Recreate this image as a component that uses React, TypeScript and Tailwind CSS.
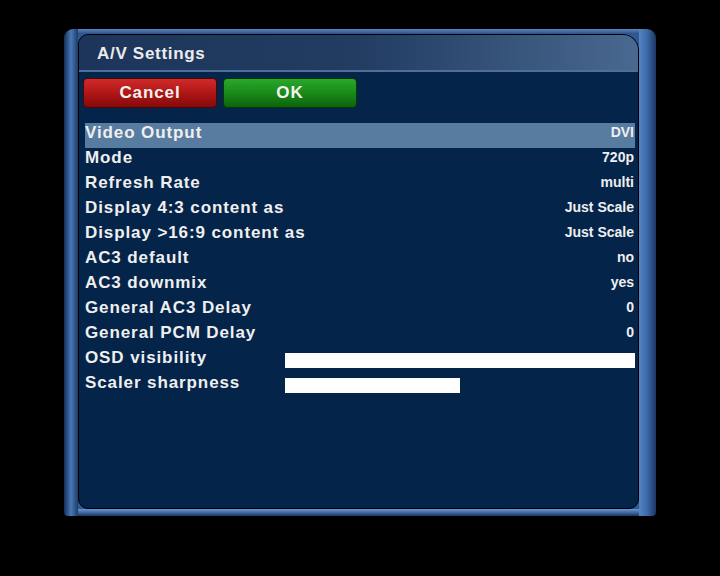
import React from "react";

const rows = [
  { label: "Video Output", value: "DVI" },
  { label: "Mode", value: "720p" },
  { label: "Refresh Rate", value: "multi" },
  { label: "Display 4:3 content as", value: "Just Scale" },
  { label: "Display >16:9 content as", value: "Just Scale" },
  { label: "AC3 default", value: "no" },
  { label: "AC3 downmix", value: "yes" },
  { label: "General AC3 Delay", value: "0" },
  { label: "General PCM Delay", value: "0" },
];

const sliders = [
  { label: "OSD visibility", pct: 100 },
  { label: "Scaler sharpness", pct: 50 },
];

export default function App() {
  const selected = 0;

  return (
    <div
      className="w-[720px] h-[576px] bg-black pt-[29px] pl-[64px]"
      style={{ fontFamily: '"Liberation Sans", Arial, sans-serif' }}
    >
      <div className="flex w-[592px] h-[487px] rounded-t-[9px] rounded-b-[4px] overflow-hidden">
        {/* left bar */}
        <div className="w-[14px] bg-gradient-to-r from-[#14305a] via-[#4a79b6] to-[#1d3c68]"></div>

        <div className="flex-1 flex flex-col bg-[#2f5790]">
          <div className="h-[5px] bg-gradient-to-b from-[#5a86c0] to-[#2c5088]"></div>

          <div className="flex-1 flex flex-col bg-[#05244a] border border-black rounded-tl-[10px] rounded-tr-[16px] rounded-b-[10px] overflow-hidden">
            {/* title */}
            <div className="h-[37px] flex items-center pl-[18px] pt-[2px] bg-gradient-to-r from-[#1d355a] via-[#223c62] to-[#4a6990] border-b-2 border-[#4f6f9a]">
              <span className="text-[17px] font-bold tracking-[0.7px] text-[#ececec]">A/V Settings</span>
            </div>

            <div className="flex gap-[6px] pl-[4px] pt-[6px]">
              <div className="w-[134px] h-[30px] rounded-[4px] border border-[#4a0606] bg-gradient-to-b from-[#d02a2a] via-[#b01616] to-[#860a0a] flex items-center justify-center">
                <span className="text-[17px] font-bold tracking-[0.9px] text-[#f2f2f2]">Cancel</span>
              </div>
              <div className="w-[134px] h-[30px] rounded-[4px] border border-[#063806] bg-gradient-to-b from-[#2aa82a] via-[#198a19] to-[#0c640c] flex items-center justify-center">
                <span className="text-[17px] font-bold tracking-[0.9px] text-[#f2f2f2]">OK</span>
              </div>
            </div>

            <div className="flex flex-col pl-[6px] pr-[3px] pt-[15px]">
              {rows.map((row, index) => (
                <div
                  key={index}
                  className={`flex items-start justify-between h-[25px] pr-[1px] ${
                    index === selected ? "bg-[#587ba0]" : ""
                  }`}
                >
                  <span className="text-[17px] leading-[19px] font-bold tracking-[0.9px] text-[#efefef]">
                    {row.label}
                  </span>
                  <span className="text-[14px] leading-[19px] font-bold text-[#efefef]">
                    {row.value}
                  </span>
                </div>
              ))}
              {sliders.map((s, index) => (
                <div key={index} className="flex items-start h-[25px]">
                  <span className="w-[200px] text-[17px] leading-[19px] font-bold tracking-[0.9px] text-[#efefef]">
                    {s.label}
                  </span>
                  <div className="flex-1 pt-[5px]">
                    <div className="h-[15px] bg-white" style={{ width: `${s.pct}%` }}></div>
                  </div>
                </div>
              ))}
            </div>
          </div>

          <div className="h-[7px] bg-gradient-to-b from-[#6a96d0] via-[#3f6aa6] to-[#1a3560]"></div>
        </div>

        {/* right bar */}
        <div className="w-[17px] bg-gradient-to-r from-[#5584c2] via-[#3b68a6] to-[#1a3762]"></div>
      </div>
    </div>
  );
}
